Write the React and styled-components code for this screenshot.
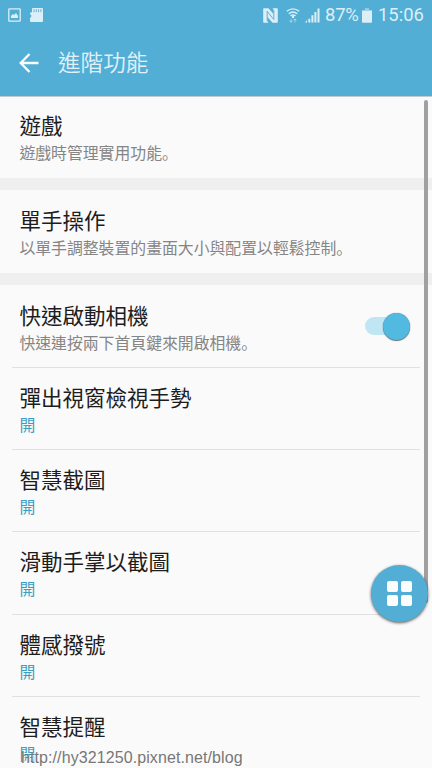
import React from "react";
import styled, { createGlobalStyle } from "styled-components";

const GlobalStyle = createGlobalStyle`
  * { box-sizing: border-box; }
  html, body { margin: 0; padding: 0; overflow: hidden; }
`;

const Screen = styled.div`
  position: relative;
  width: 432px;
  height: 768px;
  overflow: hidden;
  background: #fafafa;
  font-family: "Noto Sans CJK TC", sans-serif;
`;

const Header = styled.header`
  height: 96px;
  background: #52aed5;
  box-shadow: 0 1px 0 #c3cbce;
`;

const StatusBar = styled.div`
  display: flex;
  justify-content: space-between;
  height: 30px;
  padding: 0 9px 0 8px;
  color: #dceff7;
`;

const StatusGroup = styled.div`
  display: flex;
  align-items: center;
  gap: ${(p) => p.$gap || 0}px;
  height: 30px;
`;

const StatusText = styled.span`
  width: ${(p) => p.$width}px;
  margin-left: ${(p) => p.$left}px;
  font: 400 18.4px/30px Roboto, sans-serif;
  letter-spacing: ${(p) => p.$spacing || 0}px;
  white-space: nowrap;
`;

const StatusIcon = styled.svg`
  display: block;
  flex: none;
  margin-left: ${(p) => p.$left || 0}px;
`;

const TitleBar = styled.div`
  display: flex;
  align-items: center;
  gap: 19px;
  height: 65px;
  padding: 0 0 0 19px;
`;

const PageTitle = styled.h1`
  margin: 0 0 2px;
  color: #e0f1f8;
  font-size: 22.6px;
  font-weight: 350;
  line-height: 30px;
`;

const Row = styled.section`
  display: flex;
  justify-content: space-between;
  height: ${(p) => p.$height || 82.2}px;
  padding: ${(p) => p.$top ?? 16}px 22px 0 19.4px;
`;

const RowTitle = styled.h2`
  margin: 0;
  color: #1d1d1d;
  font-size: 21.5px;
  font-weight: 400;
  line-height: 28px;
  white-space: nowrap;
`;

const RowDetail = styled.p`
  margin: 0;
  padding-top: 2px;
  color: ${(p) => (p.$active ? "#3c9fc2" : "#858585")};
  font-size: 15.85px;
  line-height: 24px;
  white-space: nowrap;
`;

const FullStop = styled.span`
  font-family: "Noto Sans CJK SC", sans-serif;
`;

const SectionGap = styled.div`
  height: 12px;
  background: #efefef;
`;

const Divider = styled.hr`
  height: 1px;
  margin: 0 12px -1px;
  border: 0;
  background: #e0e0e0;
`;

const SwitchTrack = styled.div`
  display: flex;
  align-items: center;
  justify-content: flex-end;
  width: 45px;
  height: 18px;
  margin-top: 16px;
  border-radius: 9px;
  background: #c0e6f4;
`;

const SwitchThumb = styled.span`
  flex: none;
  width: 27px;
  height: 27px;
  border-radius: 50%;
  background: #52b9e0;
  box-shadow: 0 0 1px #5c7480, 0 1px 1px #657780;
`;

const ScrollThumb = styled.div`
  position: absolute;
  top: 100px;
  right: 4px;
  width: 4px;
  height: 503px;
  border-radius: 2px;
  background: #a0a0a0;
`;

const FloatingButton = styled.button`
  position: absolute;
  top: 565px;
  left: 371px;
  display: grid;
  grid-template-columns: 11px 11px;
  grid-template-rows: 11px 11px;
  gap: 3px;
  place-content: center;
  width: 57px;
  height: 57px;
  padding: 0 1px 0 0;
  border: 0;
  border-radius: 50%;
  background: #52aed5;
  box-shadow: 0 1px 3px rgba(0, 0, 0, 0.65);
`;

const Tile = styled.span`
  border-radius: 2px;
  background: #fcfcfc;
`;

const Watermark = styled.div`
  position: absolute;
  top: 748px;
  left: 21px;
  color: #777;
  font: 400 16px/20px "Liberation Sans", sans-serif;
  letter-spacing: 0.09px;
  text-shadow: 1px 1px 0 rgba(255, 255, 255, 0.8);
  white-space: nowrap;
`;

const options = ["彈出視窗檢視手勢", "智慧截圖", "滑動手掌以截圖", "體感撥號", "智慧提醒"];

function PictureIcon() {
  return (
    <StatusIcon width="13" height="14" viewBox="0 0 13 14">
      <rect x="0.8" y="0.8" width="11.4" height="12.4" rx="0.6" fill="none" stroke="currentColor" strokeWidth="1.3" />
      <path d="M3 10V8l2-2 1 1 2-2 2 3v2z" fill="currentColor" />
    </StatusIcon>
  );
}

function CardIcon() {
  return (
    <StatusIcon width="13" height="14" viewBox="0 0 13 14">
      <path d="M3 0h9q1 0 1 1v12q0 1-1 1H1q-1 0-1-1v-3l1.200-1V7L0 6V5l2-1V1q0-1 1-1z" fill="currentColor" />
      <path d="M4 1.2v3M6.3 1.2v3M8.6 1.2v3M10.9 1.2v3" stroke="#52aed5" strokeWidth="0.9" />
    </StatusIcon>
  );
}

function NfcIcon() {
  return (
    <StatusIcon width="15" height="15" viewBox="0 0 15 15">
      <path d="M1 .3h4.500L10.500 6V1.500L9.500.3H14q.8 0 .8.8v12.800q0 .8-.8.8H9.500L4.500 9v4.500l1 1.200H1q-.8 0-.8-.8V1.100Q.2.3 1 .3z" fill="currentColor" />
      <path d="M4.200 3v10M4.300 3.500l6.500 8M10.800 2v9.500" fill="none" stroke="#52aed5" strokeWidth="0.9" />
    </StatusIcon>
  );
}

function WifiIcon() {
  return (
    <StatusIcon $left={8} width="14" height="15" viewBox="0 0 14 15">
      <path d="M.8 3.300q6.200-4.800 12.400 0M2.700 5.700q4.300-3.400 8.600 0M4.500 7.900q2.500-1.900 5 0" fill="none" stroke="currentColor" strokeWidth="1.4" />
      <circle cx="7" cy="9" r="1.200" fill="currentColor" />
      <path d="M5 14.500V11M3.400 12.500 5 14.300l1.400-1.600M9 10.800v3.700M7.600 12.500 9 11l1.500 1.500" fill="none" stroke="currentColor" strokeWidth="1" opacity="0.55" />
    </StatusIcon>
  );
}

function SignalIcon() {
  return (
    <StatusIcon $left={5} width="15" height="15" viewBox="0 0 15 15">
      <path d="M0 14.500 2 12v2.500zM3.300 10.800h2v3.700h-2zM6.400 7.300h2v7.200h-2zM9.400 4h2v10.500h-2zM12.500.5h2v14h-2z" fill="currentColor" />
    </StatusIcon>
  );
}

function BatteryIcon() {
  return (
    <StatusIcon $left={3} width="10" height="15" viewBox="0 0 10 15">
      <path d="M3 .3h4V2h3v1H0V2h3z" fill="currentColor" opacity="0.55" />
      <path d="M0 3h10v11q0 .7-.7.7H.7Q0 14.700 0 14z" fill="currentColor" />
    </StatusIcon>
  );
}

function BackIcon() {
  return (
    <StatusIcon width="20" height="20" viewBox="0 0 20 20">
      <path d="M19.500 10H2M10.500 1 1.700 10l8.800 9" fill="none" stroke="#fafdff" strokeWidth="2.300" />
    </StatusIcon>
  );
}

export default function App() {
  return (
    <>
      <GlobalStyle />
      <Screen>
        <Header>
          <StatusBar>
            <StatusGroup $gap={9}>
              <PictureIcon />
              <CardIcon />
            </StatusGroup>
            <StatusGroup>
              <NfcIcon />
              <WifiIcon />
              <SignalIcon />
              <StatusText $left={5} $width={34} $spacing={-0.2}>87%</StatusText>
              <BatteryIcon />
              <StatusText $left={6} $width={45}>15:06</StatusText>
            </StatusGroup>
          </StatusBar>
          <TitleBar>
            <BackIcon />
            <PageTitle>進階功能</PageTitle>
          </TitleBar>
        </Header>
        <Row $height={82} $top={15}>
          <div>
            <RowTitle>遊戲</RowTitle>
            <RowDetail>遊戲時管理實用功能<FullStop>。</FullStop></RowDetail>
          </div>
        </Row>
        <SectionGap />
        <Row $height={83}>
          <div>
            <RowTitle>單手操作</RowTitle>
            <RowDetail>以單手調整裝置的畫面大小與配置以輕鬆控制<FullStop>。</FullStop></RowDetail>
          </div>
        </Row>
        <SectionGap />
        <Row $height={82}>
          <div>
            <RowTitle>快速啟動相機</RowTitle>
            <RowDetail>快速連按兩下首頁鍵來開啟相機<FullStop>。</FullStop></RowDetail>
          </div>
          <SwitchTrack>
            <SwitchThumb />
          </SwitchTrack>
        </Row>
        {options.map((name) => (
          <React.Fragment key={name}>
            <Divider />
            <Row>
              <div>
                <RowTitle>{name}</RowTitle>
                <RowDetail $active>開</RowDetail>
              </div>
            </Row>
          </React.Fragment>
        ))}
        <ScrollThumb />
        <FloatingButton aria-label="功能">
          <Tile />
          <Tile />
          <Tile />
          <Tile />
        </FloatingButton>
        <Watermark>http://hy321250.pixnet.net/blog</Watermark>
      </Screen>
    </>
  );
}
